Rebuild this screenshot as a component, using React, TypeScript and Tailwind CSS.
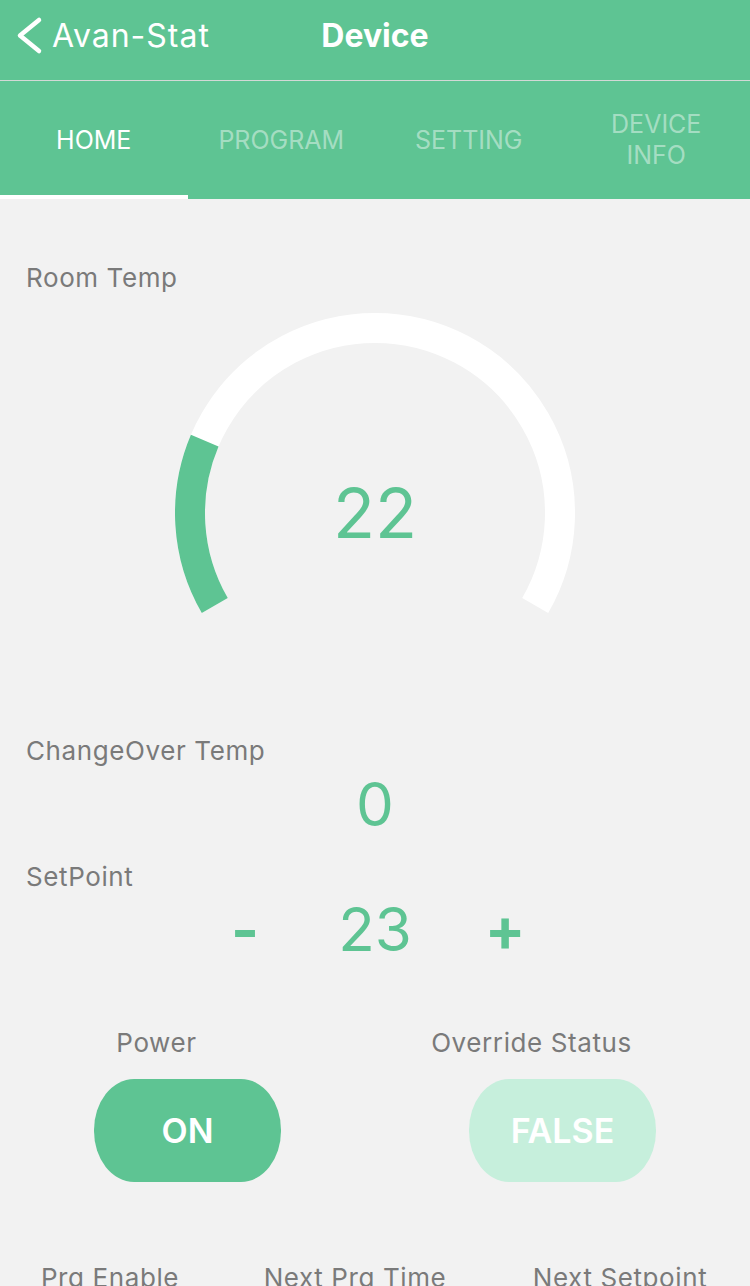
import React from "react";

const GREEN = "#5ec493";

export default function App() {
  return (
    <div
      className="min-h-[1286px] w-[750px] overflow-hidden bg-[#f2f2f2]"
      style={{ fontFamily: "Inter, 'Noto Sans', sans-serif" }}
    >
      {/* nav bar */}
      <header className="grid h-[81px] grid-cols-[1fr_auto_1fr] items-center border-b border-[#d3d9d6] bg-[#5ec493] pb-[8px] text-white">
        <div className="flex items-center">
          <svg width="30" height="40" viewBox="0 0 30 40" className="ml-[14px]">
            <polyline
              points="25,4 6,19.5 25,35"
              fill="none"
              stroke="white"
              strokeWidth="4.5"
              strokeLinecap="round"
              strokeLinejoin="round"
            />
          </svg>
          <span className="ml-[8px] text-[32px] leading-[32px] tracking-[1px]">Avan-Stat</span>
        </div>
        <span className="text-[32px] font-bold leading-[32px]">Device</span>
        <div />
      </header>

      {/* tabs */}
      <nav className="grid h-[118px] grid-cols-4 bg-[#5ec493]">
        <Tab label="HOME" active />
        <Tab label="PROGRAM" />
        <Tab label="SETTING" />
        <Tab label={"DEVICE\nINFO"} />
      </nav>

      <main className="flex flex-col">
        <Label className="mt-[63px] pl-[26px]">Room Temp</Label>

        {/* gauge */}
        <div className="relative ml-[175px] mt-[19px] h-[310px] w-[400px]">
          <Gauge />
          <div className="absolute left-0 top-0 flex h-[400px] w-[400px] items-center justify-center">
            <span className="text-[69px] leading-[69px] text-[#5ec493]">22</span>
          </div>
        </div>

        <Label className="mt-[112px] pl-[26px]">ChangeOver Temp</Label>
        <div className="mt-[7px] text-center text-[60px] leading-[60px] text-[#5ec493]">0</div>

        <Label className="mt-[27px] pl-[26px]">SetPoint</Label>
        <div className="mt-[6px] flex justify-center text-[#5ec493]">
          <span className="w-[130px] text-center text-[60px] font-bold leading-[60px]">-</span>
          <span className="w-[130px] text-center text-[60px] leading-[60px]">23</span>
          <span className="w-[130px] text-center text-[60px] font-bold leading-[60px]">+</span>
        </div>

        {/* toggles */}
        <div className="mt-[68px] grid grid-cols-2">
          <Toggle label="Power" value="ON" on />
          <Toggle label="Override Status" value="FALSE" />
        </div>

        <div className="mt-[80px] grid grid-cols-[220px_270px_260px] text-center">
          <Label>Prg Enable</Label>
          <Label>Next Prg Time</Label>
          <Label>Next Setpoint</Label>
        </div>
      </main>
    </div>
  );
}

/* ---------- helpers ---------- */

function Tab({ label, active }: { label: string; active?: boolean }) {
  return (
    <div className="relative flex items-center justify-center">
      <span
        className={`whitespace-pre text-center text-[25px] leading-[31px] ${
          active ? "text-white" : "text-white/45"
        }`}
      >
        {label}
      </span>
      {active && <div className="absolute bottom-0 left-0 h-[4px] w-full bg-white" />}
    </div>
  );
}

function Label({ children, className = "" }: { children: React.ReactNode; className?: string }) {
  return (
    <div className={`text-[26px] leading-[32px] tracking-[0.6px] text-[#7a7a7a] ${className}`}>
      {children}
    </div>
  );
}

function Toggle({ label, value, on }: { label: string; value: string; on?: boolean }) {
  return (
    <div className="flex flex-col items-center">
      <Label className="pr-[62px]">{label}</Label>
      <div
        className={`mt-[20px] flex h-[103px] w-[187px] items-center justify-center rounded-[40px_/_51px] text-[34px] font-semibold text-white ${
          on ? "bg-[#5ec493]" : "bg-[#c6efdc]"
        }`}
      >
        {value}
      </div>
    </div>
  );
}

function point(deg: number, r: number) {
  const a = (deg * Math.PI) / 180;
  return [200 + r * Math.cos(a), 200 - r * Math.sin(a)];
}

function Gauge() {
  const r = 185;
  const [sx, sy] = point(210, r);
  const [ex, ey] = point(-30, r);
  const [gx, gy] = point(157, r);
  return (
    <svg width="400" height="310" viewBox="0 0 400 310">
      <path
        d={`M ${sx} ${sy} A ${r} ${r} 0 1 1 ${ex} ${ey}`}
        fill="none"
        stroke="white"
        strokeWidth="30"
      />
      <path
        d={`M ${sx} ${sy} A ${r} ${r} 0 0 1 ${gx} ${gy}`}
        fill="none"
        stroke={GREEN}
        strokeWidth="30"
      />
    </svg>
  );
}
